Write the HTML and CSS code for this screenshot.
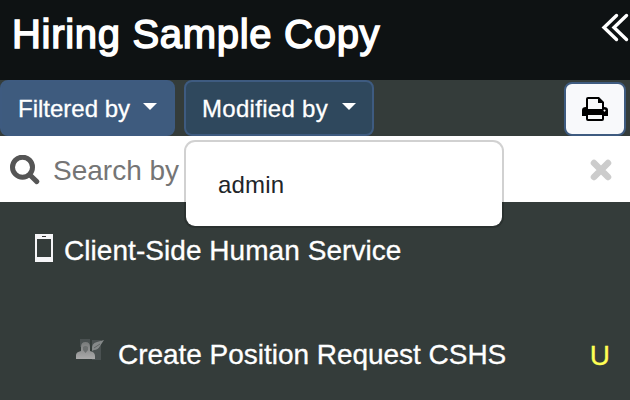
FILE: index.html
```html
<!DOCTYPE html>
<html lang="en">
<head>
<meta charset="utf-8">
<title>Hiring Sample Copy</title>
<link rel="stylesheet" href="styles.css">
</head>
<body>
<header class="header">
  <h1 class="title">Hiring Sample Copy</h1>
  <svg class="collapse" width="28" height="30" viewBox="0 0 28 30"><path d="M15.500 2.500 3 14.500l12.500 12M25.500 2.500 13 14.500l12.500 12"/></svg>
</header>
<nav class="toolbar">
  <button class="btn filtered"><span>Filtered by</span><i class="caret"></i></button>
  <div class="dropdown">
    <button class="btn modified"><span>Modified by</span><i class="caret"></i></button>
    <div class="menu">admin</div>
  </div>
  <button class="print" aria-label="Print">
    <svg width="26" height="24" viewBox="0 0 26 24"><path fill-rule="evenodd" d="M4 2q0-2 2-2h11l5 5v5q4 0 4 3v6h-4v3q0 2-2 2H6q-2 0-2-2v-3H0v-6q0-3 4-3zm2 0v10h14V6h-4V2zm0 16v4h14v-4zm16.500-5.500a1 1 0 1 0 .01 0z"/></svg>
  </button>
</nav>
<div class="search">
  <svg class="lens" width="30" height="30" viewBox="0 0 30 30"><circle cx="12.500" cy="12.200" r="10"/><path d="m20 20 6.800 6.600"/></svg>
  <span class="placeholder">Search by</span>
  <svg class="clear" width="24" height="24" viewBox="0 0 24 24"><path d="M5 5l14 14M19 5L5 19"/></svg>
</div>
<main class="list">
  <div class="row group">
    <svg class="phone" width="18" height="28" viewBox="0 0 18 28"><path fill="#f5f5f7" fill-rule="evenodd" d="M0 0h18v28H0zm2 5v18h14V5z"/><path fill="#333" d="M7 2h4v1H7z"/></svg>
    <span class="label">Client-Side Human Service</span>
  </div>
  <div class="row item">
    <svg class="user" width="28" height="24" viewBox="0 0 28 24">
      <defs><linearGradient id="g" x2="0" y2="1"><stop stop-color="#777a7a"/><stop offset="1" stop-color="#aaa"/></linearGradient></defs>
      <path fill="#4a5151" d="M4 1h10v8H4zm12 1h9v20h-9z"/>
      <path fill="url(#g)" d="M0 21v-4q0-3 5-4V9q0-5 4.500-5T14 9v4q5 1 5 5v3z"/>
      <path fill="#6c7070" d="M7 9q2.500-2 5 0v3l-2.500 3L7 12z"/>
      <path fill="#858989" d="M16 13q-1-8 5-9l7-2-4 6q-2 4-6 4z"/>
      <path stroke="#606565" d="m18 10 6-4"/>
    </svg>
    <span class="name">Create Position Request CSHS</span>
    <span class="flag">U</span>
  </div>
</main>
</body>
</html>
```
FILE: styles.css
```css
* { box-sizing: border-box; }
body {
  margin: 0;
  height: 400px;
  overflow: hidden;
  background: #343c3a;
  color: #fff;
  font-family: "Liberation Sans", sans-serif;
}
svg { display: block; flex: none; }
.header {
  height: 80px;
  padding: 11px 0 0 12px;
  display: flex;
  justify-content: space-between;
  background: #0e1213;
}
.title {
  margin: 0;
  font-size: 40px;
  font-weight: 400;
  line-height: 46px;
  letter-spacing: 0.7px;
  white-space: nowrap;
  -webkit-text-stroke: 1.5px #fff;
}
.collapse { margin: 2px 1px 0 0; fill: none; stroke: #fff; stroke-width: 3.4; stroke-linecap: round; }
.toolbar { height: 56px; display: flex; gap: 9px; }
.btn {
  height: 56px;
  padding: 0 16px;
  display: flex;
  align-items: center;
  justify-content: space-between;
  border: 2px solid #3e5b80;
  border-radius: 8px;
  background: #3e5b7e;
  color: #fff;
  font: 24px "Liberation Sans", sans-serif;
  white-space: nowrap;
}
.btn span { margin-top: 2px; -webkit-text-stroke: 0.3px; }
.filtered { width: 175px; }
.modified { width: 190px; background: #2f485d; letter-spacing: 0.3px; }
.caret { margin-bottom: 3px; border: 7px solid transparent; border-top-color: #fff; border-bottom: 0; }
.dropdown { position: relative; }
.menu {
  position: absolute;
  z-index: 1;
  top: 60px;
  left: 0;
  width: 320px;
  height: 88px;
  padding: 29px 32px;
  border: 2px solid rgba(0, 0, 0, 0.18);
  border-radius: 11px;
  background: #fff;
  background-clip: padding-box;
  color: #212529;
  font-size: 24px;
  line-height: 28px;
  letter-spacing: 0.2px;
}
.print {
  width: 62px;
  height: 54px;
  margin: 2px 4px 0 auto;
  padding: 0;
  display: grid;
  place-items: center;
  border: 2px solid #3e5b80;
  border-radius: 8px;
  background: #f8f9fb;
}
.search {
  height: 66px;
  padding: 2px 17px 0 10px;
  display: flex;
  align-items: center;
  background: #fff;
}
.lens { fill: none; stroke: #555; stroke-width: 5; stroke-linecap: round; }
.placeholder { margin: 2px 0 0 13px; color: #757575; font-size: 28px; }
.clear { margin-left: auto; stroke: #ccc; stroke-width: 6.5; stroke-linecap: round; }
.row {
  display: flex;
  align-items: center;
  height: 104px;
  font-size: 28px;
  white-space: nowrap;
  -webkit-text-stroke: 0.3px;
}
.group { height: 96px; padding: 0 0 4px 35px; gap: 11px; letter-spacing: 0.05px; }
.label { margin-top: 6px; }
.item { padding: 4px 20px 0 76px; gap: 14px; }
.name { margin-top: 5px; letter-spacing: -0.03px; }
.user { margin-bottom: 4px; }
.flag { margin: 8px 0 0 auto; color: #ffff54; }
```
